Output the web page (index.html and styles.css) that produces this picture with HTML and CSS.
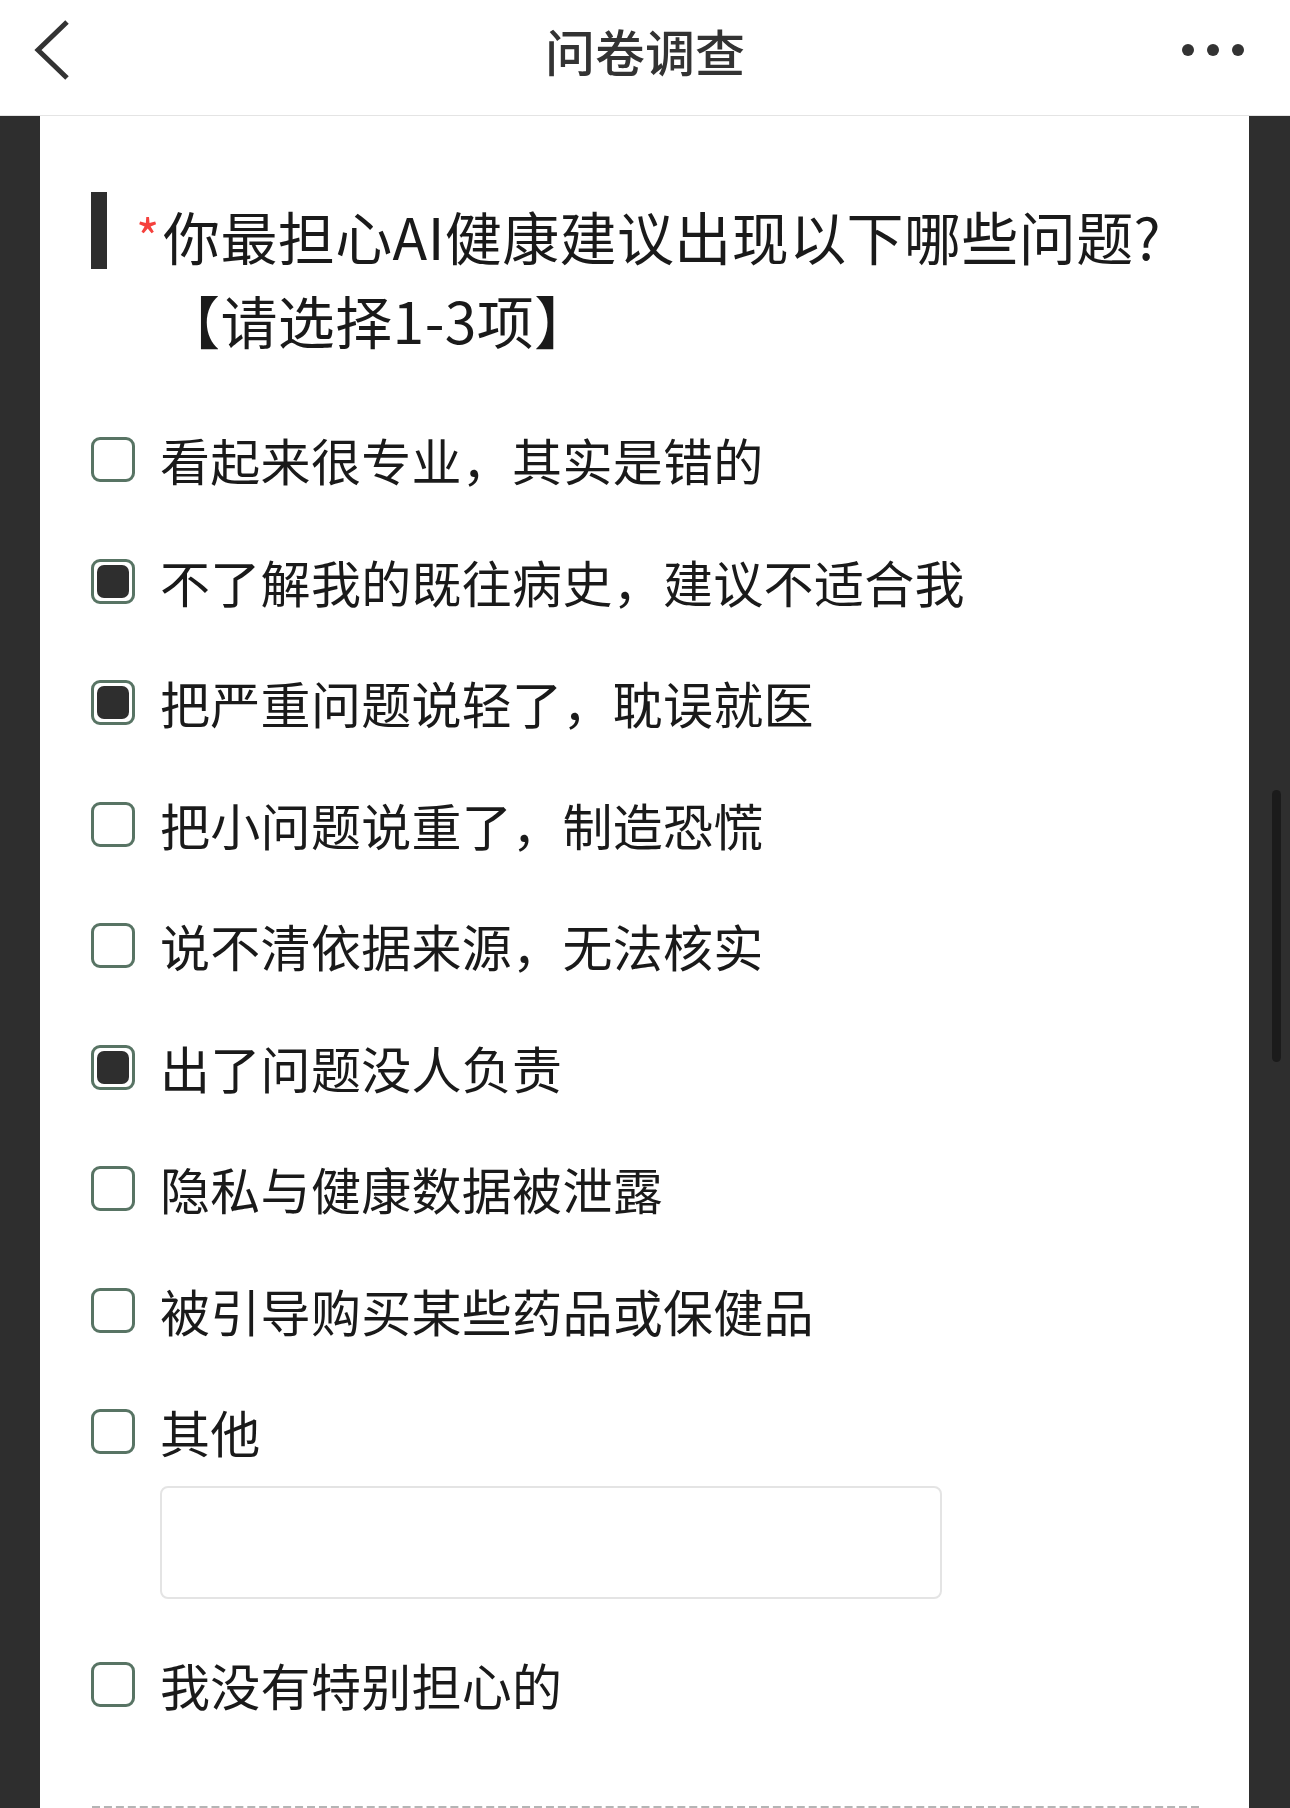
FILE: index.html
```html
<!DOCTYPE html>
<html lang="zh-CN">
<head>
    <meta charset="UTF-8">
    <meta name="viewport" content="width=device-width, initial-scale=1.0">
    <title>问卷调查</title>
    <link rel="stylesheet" href="styles.css">
</head>
<body>
    <header class="top-bar">
        <div class="back">
            <svg width="40" height="60" viewBox="0 0 40 60">
                <path d="M34 2 L5 30 L34 58" fill="none" stroke="#333" stroke-width="5"/>
            </svg>
        </div>
        <h1 class="page-title">问卷调查</h1>
        <div class="more">
            <svg width="64" height="16" viewBox="0 0 64 16">
                <circle cx="7" cy="8" r="6" fill="#333"/>
                <circle cx="32" cy="8" r="6" fill="#333"/>
                <circle cx="57" cy="8" r="6" fill="#333"/>
            </svg>
        </div>
    </header>

    <main class="card">
        <div class="question">
            <span class="bar"></span>
            <span class="required">*</span>
            <div class="question-text">你最担心AI健康建议出现以下哪些问题?【请选择1-3项】</div>
        </div>

        <div class="options">
            <label class="option"><span class="box"></span><span class="label">看起来很专业，其实是错的</span></label>
            <label class="option"><span class="box checked"></span><span class="label">不了解我的既往病史，建议不适合我</span></label>
            <label class="option"><span class="box checked"></span><span class="label">把严重问题说轻了，耽误就医</span></label>
            <label class="option"><span class="box"></span><span class="label">把小问题说重了，制造恐慌</span></label>
            <label class="option"><span class="box"></span><span class="label">说不清依据来源，无法核实</span></label>
            <label class="option"><span class="box checked"></span><span class="label">出了问题没人负责</span></label>
            <label class="option"><span class="box"></span><span class="label">隐私与健康数据被泄露</span></label>
            <label class="option"><span class="box"></span><span class="label">被引导购买某些药品或保健品</span></label>
            <label class="option option-other"><span class="box"></span><span class="label">其他</span></label>
            <div class="other-input"></div>
            <label class="option"><span class="box"></span><span class="label">我没有特别担心的</span></label>
        </div>

        <div class="divider"></div>
    </main>

    <div class="scrollbar"></div>
</body>
</html>
```

FILE: styles.css
```css
body {
    margin: 0;
    background: #2e2e2e;
    font-family: "Noto Sans CJK SC", "Noto Sans", sans-serif;
    color: #1a1a1a;
}
.top-bar {
    display: grid;
    grid-template-columns: 1fr auto 1fr;
    align-items: center;
    height: 100px;
    padding-bottom: 15px;
    background: #fff;
    border-bottom: 1px solid #e4e4e4;
}
.back {
    padding-left: 33px;
    display: flex;
}
.page-title {
    margin: 0;
    font-size: 50px;
    font-weight: 500;
    color: #333;
    line-height: 1;
}
.more {
    display: flex;
    justify-content: flex-end;
    padding-right: 45px;
}
.card {
    margin: 0 41px 0 40px;
    background: #fff;
    padding: 77px 50px 40px 51px;
}
.question {
    display: flex;
    align-items: flex-start;
}
.bar {
    flex: none;
    width: 16px;
    height: 77px;
    margin-top: -1px;
    background: #2e2e2e;
}
.required {
    flex: none;
    width: 27px;
    margin-left: 29px;
    color: #f5413d;
    font-size: 50px;
    line-height: 1;
    padding-top: 17px;
}
.question-text {
    font-size: 57px;
    line-height: 84px;
    letter-spacing: 0.4px;
}
.options {
    margin-top: 38px;
}
.option {
    display: flex;
    align-items: center;
    padding: 23.25px 0;
}
.option-other {
    padding-bottom: 0;
}
.box {
    position: relative;
    flex: none;
    box-sizing: border-box;
    width: 44px;
    height: 45px;
    border: 3px solid #587464;
    border-radius: 9px;
    margin-right: 25px;
}
.box.checked::after {
    content: "";
    position: absolute;
    top: 3px;
    left: 3px;
    right: 3px;
    bottom: 3px;
    background: #2e2e2e;
    border-radius: 7px;
}
.label {
    font-size: 50px;
    line-height: 75px;
    letter-spacing: 0.3px;
}
.other-input {
    box-sizing: border-box;
    width: 782px;
    height: 113px;
    margin: 16.5px 0 25px 69px;
    border: 2px solid #e4e4e4;
    border-radius: 8px;
}
.divider {
    margin-top: 61px;
    margin-left: 1px;
    border-top: 4px dashed #b4b4b4;
}
.scrollbar {
    position: fixed;
    left: 1272px;
    top: 790px;
    width: 9px;
    height: 272px;
    border-radius: 5px;
    background: #1b1b1b;
}
```
